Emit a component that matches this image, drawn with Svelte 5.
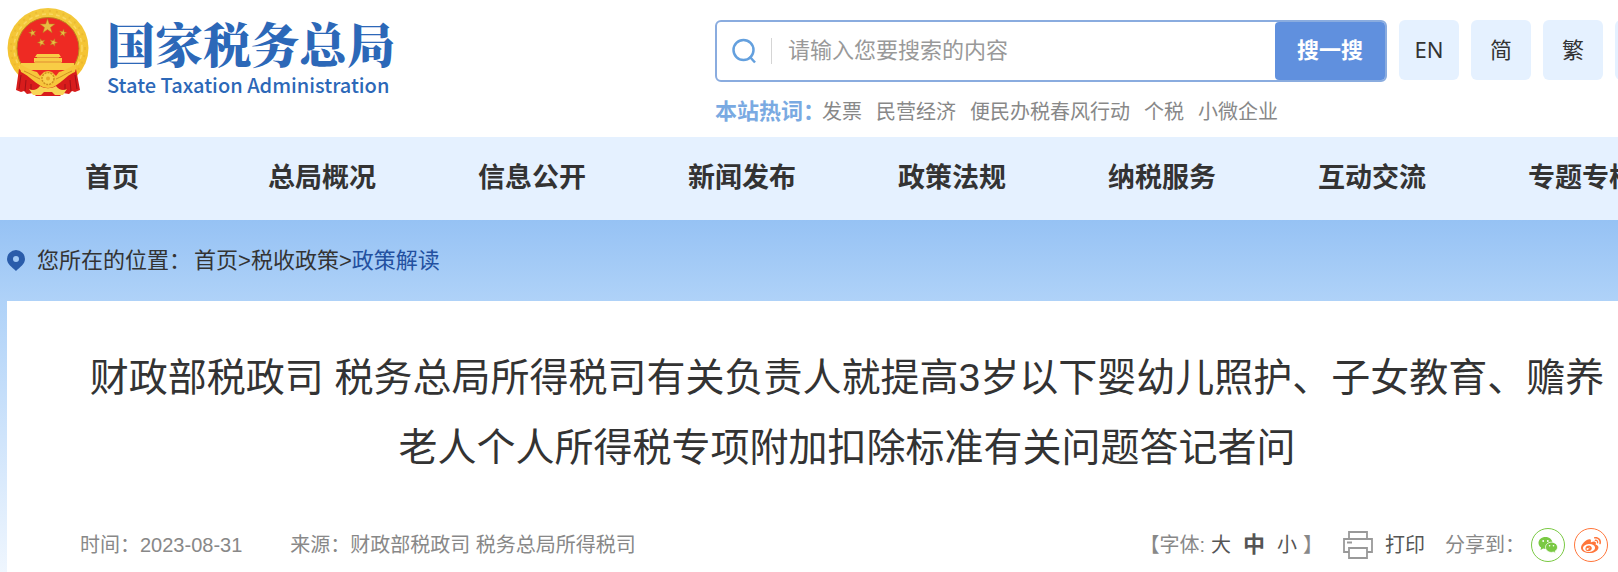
<script>
  const languages = ['EN', '简', '繁', '无'];
  const hotWords = ['发票', '民营经济', '便民办税春风行动', '个税', '小微企业'];
  const menu = ['首页', '总局概况', '信息公开', '新闻发布', '政策法规', '纳税服务', '互动交流', '专题专栏'];

  // Five-pointed star centred on (cx, cy) with outer radius r.
  function star(cx, cy, r, turn = 0) {
    return Array.from({ length: 10 }, (_, i) => {
      const a = ((i * 36 - 90 + turn) * Math.PI) / 180;
      const d = i % 2 ? r * 0.4 : r;
      return `${(cx + d * Math.cos(a)).toFixed(1)},${(cy + d * Math.sin(a)).toFixed(1)}`;
    }).join(' ');
  }
</script>

<div class="page">
  <header class="wrap header">
    <a class="brand" href="#home">
      <svg class="emblem" viewBox="0 0 82 88" aria-hidden="true">
        <defs>
          <linearGradient id="gold" x1="0" y1="0" x2="0" y2="1">
            <stop offset="0" stop-color="#f3c93c" />
            <stop offset="1" stop-color="#f6bf2b" />
          </linearGradient>
        </defs>
        <ellipse cx="41" cy="40" rx="40.500" ry="40" fill="url(#gold)" />
        <ellipse cx="41" cy="40" rx="37" ry="37" fill="none" stroke="#dca226" stroke-width="2" stroke-dasharray="2 5" opacity=".35" />
        <ellipse cx="41" cy="40" rx="34" ry="34" fill="none" stroke="#ffe27a" stroke-width="1.500" stroke-dasharray="4 3" opacity=".6" />
        <ellipse cx="41" cy="40.500" rx="31" ry="31" fill="#ee2a23" stroke="#bd8420" stroke-width="1" />
        <g fill="#e9bc42" stroke="#b97a1c" stroke-width=".5">
          <polygon points={star(40.5, 18.5, 7.8)} />
          <polygon points={star(25.5, 25, 3.8, -12)} />
          <polygon points={star(56, 25, 3.8, 12)} />
          <polygon points={star(34.5, 34.5, 4, -18)} />
          <polygon points={star(46.5, 34.5, 4, 18)} />
        </g>
        <path fill="#f8cd45" d="M30 46h22l2 3h-2v1h3v4h-1l1 1h12v7H14v-7h13l1-1h-1v-4h3v-1h-2z" />
        <path d="M30 49.500h22M28 54h26" stroke="#d9742a" stroke-width=".7" />
        <path fill="#d81c1c" d="M12 61 9 82l5 2 3-1 3 3 6-1 3 3h24l3-3 6 1 3-3 3 1 5-2-4-21-14 8-14 3-15-3z" />
        <path d="M14 67l-2 14M19 72l-1 11M24 76v8M68 67l2 14M63 72l1 11M58 76v8" stroke="#a01017" stroke-width="1" fill="none" />
        <path fill="#f7c63b" d="M12 56c6 2 10 6 18 8l3 4 4-4 4-1 4 1 4 4 3-4c8-2 12-6 18-8l-2 8c-6 2-11 8-17 12-4 3-7 4-10 4s-6-1-10-4c-6-4-12-10-17-12z" />
        <path d="M17 63c7 3 11 6 16 8M65 63c-7 3-11 6-16 8" fill="none" stroke="#d08f22" stroke-width="1" />
        <circle cx="41" cy="70.500" r="6" fill="#f9d14c" stroke="#cf8f20" stroke-width="1.500" stroke-dasharray="2 1" />
        <circle cx="41" cy="70.500" r="2" fill="#e9a92c" />
        <path fill="#f8d456" d="M33 78c-3 4-7 5-11 3l4 6h8l3-3h8l3 3h8l4-6c-4 2-8 1-11-3-5 3-11 3-16 0z" />
      </svg>
      <span class="names">
        <strong>国家税务总局</strong>
        <span lang="en">State Taxation Administration</span>
      </span>
    </a>

    <div class="tools">
      <div class="row">
        <form class="search" role="search" onsubmit={(e) => e.preventDefault()}>
          <label for="query" aria-label="搜索">
            <svg viewBox="0 0 24 26" fill="none" stroke="#64a0de" stroke-width="2.500" aria-hidden="true">
              <circle cx="11.500" cy="12" r="10" />
              <path d="M17.500 18.500 23 24.500" />
            </svg>
          </label>
          <input id="query" type="text" placeholder="请输入您要搜索的内容" />
          <button type="submit">搜一搜</button>
        </form>
        {#each languages as item}
          <a class="lang" href="#lang">{item}</a>
        {/each}
      </div>
      <div class="hot">
        <strong>本站热词：</strong>
        {#each hotWords as word}
          <a href="#hot">{word}</a>
        {/each}
      </div>
    </div>
  </header>

  <nav>
    <div class="wrap menu">
      {#each menu as item}
        <a href="#menu">{item}</a>
      {/each}
    </div>
  </nav>

  <main>
    <div class="wrap">
      <div class="crumbs">
        <svg viewBox="0 0 18 21" aria-hidden="true">
          <path fill="#2a5caa" fill-rule="evenodd" d="M9 0a9 9 0 0 1 9 9c0 5-5 8-9 12C5 17 0 14 0 9a9 9 0 0 1 9-9zm0 6a3 3 0 1 0 0 6 3 3 0 0 0 0-6z" />
        </svg>
        <span class="where">您所在的位置：</span>
        <a href="#home">首页</a>&gt;<a href="#policy">税收政策</a>&gt;<a class="current" href="#reading">政策解读</a>
      </div>

      <article>
        <h1>财政部税政司 税务总局所得税司有关负责人就提高3岁以下婴幼儿照护、子女教育、赡养老人个人所得税专项附加扣除标准有关问题答记者问</h1>
        <div class="meta">
          <span class="date">时间：2023-08-31</span>
          <span>来源：财政部税政司 税务总局所得税司</span>
          <div class="sizes">
            <span>【字体:</span>
            <button type="button">大</button>
            <button type="button" class="on">中</button>
            <button type="button">小</button>
            <span>】</span>
          </div>
          <button type="button" class="print">
            <svg viewBox="0 0 30 28" fill="none" stroke="#999" stroke-width="1.800" aria-hidden="true">
              <path d="M6 8V1h18v7M6 21H1V8h28v13h-5M6 17h18v10H6zM4 11.500h5" />
            </svg>
            打印
          </button>
          <span class="share">分享到：</span>
          <a class="round wechat" href="#wechat" aria-label="微信">
            <svg viewBox="0 0 20 18" aria-hidden="true">
              <path fill="#7ac943" d="M7.500 1C3.500 1 .5 3.600.5 7c0 1.900 1 3.500 2.600 4.600L2.500 14l2.700-1.400c.8.200 1.500.3 2.300.3C11.500 13 14.500 10.300 14.500 7s-3-6-7-6z" />
              <path fill="#7ac943" stroke="#fff" stroke-width=".8" d="M13.500 6.200c-3.500 0-6 2.300-6 5.100s2.500 5.100 6 5.100c.7 0 1.300-.1 1.900-.3l2.300 1.300-.6-2.100c1.400-1 2.400-2.400 2.400-4 0-2.800-2.600-5.100-6-5.100z" />
              <g fill="#fff"><circle cx="5.200" cy="5" r=".9" /><circle cx="9.800" cy="5" r=".9" /><circle cx="11.600" cy="9.700" r=".8" /><circle cx="15.500" cy="9.700" r=".8" /></g>
            </svg>
          </a>
          <a class="round weibo" href="#weibo" aria-label="微博">
            <svg viewBox="0 0 24 24" fill="#ff763b" aria-hidden="true">
              <path d="M10.098 20.323c-3.977.391-7.414-1.406-7.672-4.020-.259-2.609 2.759-5.047 6.740-5.441 3.979-.394 7.413 1.404 7.671 4.018.259 2.600-2.759 5.049-6.737 5.439l-.002.004zM9.050 17.219c-.384.616-1.208.884-1.829.602-.612-.279-.793-.991-.406-1.593.379-.595 1.176-.861 1.793-.601.622.263.820.972.442 1.592zm1.270-1.627c-.141.237-.449.353-.689.253-.236-.090-.313-.361-.177-.586.138-.227.436-.346.672-.240.239.090.315.360.180.601l.014-.028zm.176-2.719c-1.893-.493-4.033.450-4.857 2.118-.836 1.704-.026 3.591 1.886 4.210 1.983.640 4.318-.341 5.132-2.179.800-1.793-.201-3.642-2.161-4.149zm7.563-1.224c-.346-.105-.570-.180-.405-.615.375-.977.420-1.804 0-2.404-.781-1.112-2.915-1.053-5.364-.030 0 0-.766.331-.571-.271.376-1.217.315-2.224-.270-2.809-1.338-1.337-4.869.045-7.888 3.080C1.309 10.870 0 13.273 0 15.348c0 3.981 5.099 6.395 10.086 6.395 6.536 0 10.888-3.801 10.888-6.820 0-1.822-1.547-2.854-2.915-3.284v.010zm1.908-5.092c-.766-.856-1.908-1.187-2.960-.962-.436.090-.706.511-.616.932.090.420.511.691.932.602.511-.105 1.067.044 1.442.465.376.421.466.977.316 1.473-.136.406.089.856.510.992.405.119.857-.105.992-.512.330-1.021.120-2.178-.646-3.035l.030.045zm2.418-2.195c-1.576-1.757-3.905-2.419-6.054-1.968-.496.104-.812.587-.706 1.081.104.496.586.813 1.082.707 1.532-.331 3.185.150 4.296 1.383 1.112 1.246 1.429 2.943.947 4.416-.165.480.106 1.007.586 1.157.479.165.991-.104 1.157-.586.675-2.088.241-4.478-1.338-6.235l.030.045z" />
            </svg>
          </a>
        </div>
      </article>
    </div>
  </main>
</div>

<style>
  :global(body) {
    margin: 0;
    overflow: hidden;
  }

  .page {
    display: flex;
    flex-direction: column;
    min-height: 100vh;
    overflow: hidden;
    background: #fff;
    color: #333;
    font-family: "Liberation Sans", "Noto Sans CJK SC", sans-serif;
    font-size: 20px;
    line-height: 30px;
  }

  a {
    color: inherit;
    text-decoration: none;
  }

  button,
  input {
    padding: 0;
    border: 0;
    background: none;
    color: inherit;
    font: inherit;
  }

  /* The content column is wider than a small window and runs past its right edge. */
  .wrap {
    box-sizing: border-box;
    min-width: 1687px;
    padding-left: 7px;
  }

  .header {
    display: flex;
    height: 137px;
  }

  .brand {
    display: flex;
    flex: 0 0 708px;
    align-items: flex-start;
    gap: 18px;
    padding-top: 8px;
    box-sizing: border-box;
  }

  .emblem {
    width: 82px;
    height: 88px;
  }

  .names {
    display: flex;
    flex-direction: column;
    padding-top: 7px;
    color: #2c68b8;
    font-family: "Noto Sans CJK SC", sans-serif;
    font-size: 20px;
    font-weight: 500;
    line-height: 28px;
  }

  .names strong {
    font-family: "Noto Serif CJK SC", "Noto Sans CJK SC", serif;
    font-size: 48px;
    font-weight: 900;
    line-height: 56px;
  }

  .tools {
    flex: 1;
    padding-top: 20px;
  }

  .row {
    display: flex;
    gap: 12px;
  }

  .search {
    display: flex;
    flex: 0 0 672px;
    box-sizing: border-box;
    height: 62px;
    border: 2px solid #8aacdf;
    border-radius: 6px;
    font-size: 22px;
  }

  .search label {
    display: flex;
    align-items: center;
    margin: 16px 0;
    padding: 0 15px;
    border-right: 1px solid #d5d5d5;
  }

  .search svg {
    width: 24px;
    height: 26px;
  }

  .search input {
    flex: 1;
    min-width: 0;
    padding-left: 16px;
    outline: 0;
  }

  .search input::placeholder {
    color: #999;
    opacity: 1;
  }

  .search button {
    width: 110px;
    border-radius: 4px;
    background: #6090de;
    color: #fff;
    font-weight: 700;
  }

  .lang {
    flex: 0 0 60px;
    height: 60px;
    border-radius: 6px;
    background: #e5f1ff;
    font-family: "Noto Sans", "Noto Sans CJK SC", sans-serif;
    font-size: 22px;
    line-height: 58px;
    text-align: center;
  }

  .hot {
    display: flex;
    gap: 14px;
    padding-top: 15px;
    color: #888;
  }

  .hot strong {
    margin-right: -17px;
    color: #7aaae2;
    font-size: 22px;
  }

  nav {
    background: #e5f1ff;
  }

  .menu {
    display: grid;
    grid-template-columns: repeat(8, 1fr);
    font-size: 27px;
    font-weight: 700;
    text-align: center;
  }

  .menu a {
    height: 83px;
    line-height: 82px;
  }

  main {
    flex: 1;
    background: linear-gradient(#96c2f4, #afd2f8 81px, #eff6fe 352px);
  }

  main .wrap {
    display: flex;
    flex-direction: column;
    min-height: 100%;
  }

  .crumbs {
    display: flex;
    align-items: center;
    height: 81px;
    font-size: 22px;
  }

  .crumbs svg {
    width: 18px;
    height: 21px;
    margin-right: 12px;
  }

  .where {
    margin-right: 3px;
  }

  .current {
    color: #2350a0;
  }

  article {
    flex: 1;
    padding: 42px 73px 10px;
    background: #fff;
  }

  h1 {
    margin: 0;
    font-size: 39px;
    font-weight: 400;
    line-height: 70px;
    text-align: center;
  }

  .meta {
    display: flex;
    align-items: center;
    height: 34px;
    margin-top: 45px;
    padding-right: 6px;
    color: #888;
  }

  .date {
    margin-right: 48px;
  }

  .sizes {
    display: flex;
    align-items: center;
    margin-left: auto;
  }

  .sizes button {
    margin: 0 6px;
    color: #555;
  }

  .sizes .on {
    font-size: 22px;
    font-weight: 700;
  }

  .print {
    display: flex;
    align-items: center;
    gap: 12px;
    margin: 0 20px;
    color: #555;
  }

  .print svg {
    width: 30px;
    height: 28px;
  }

  .share {
    margin-right: 6px;
  }

  .round {
    display: flex;
    align-items: center;
    justify-content: center;
    box-sizing: border-box;
    width: 34px;
    height: 34px;
    border: 1px solid #7ac943;
    border-radius: 50%;
  }

  .round svg {
    width: 20px;
    height: 20px;
  }

  .weibo {
    margin-left: 9px;
    border-color: #ff763b;
  }
</style>
